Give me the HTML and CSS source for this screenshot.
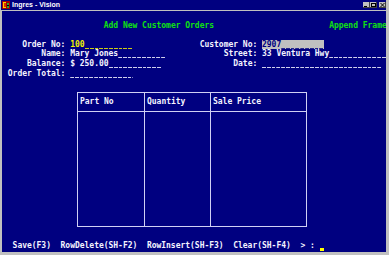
FILE: index.html
```html
<!DOCTYPE html>
<html>
<head>
<meta charset="utf-8">
<title>Ingres - Vision</title>
<link rel="stylesheet" href="styles.css">
</head>
<body>
<div class="window">
  <div class="titlebar">
    <svg class="appicon" width="8" height="8" viewBox="0 0 8 8">
      <rect x="0" y="0" width="8" height="8" fill="#a00000"/>
      <rect x="1" y="1" width="3" height="6" fill="#e03000"/>
      <rect x="1" y="1" width="1" height="6" fill="#ffd000"/>
      <rect x="1" y="1" width="3" height="1" fill="#ffd000"/>
      <rect x="1" y="6" width="3" height="1" fill="#ffd000"/>
      <rect x="5" y="2" width="2" height="5" fill="#30a030"/>
      <rect x="5" y="4" width="2" height="1" fill="#000"/>
    </svg>
    <span class="title">Ingres - Vision</span>
    <span class="buttons">
      <span class="btn"><svg width="5" height="4" viewBox="0 0 5 4"><rect x="0" y="3" width="3" height="1" fill="#000"/></svg></span>
      <span class="btn"><svg width="5" height="4" viewBox="0 0 5 4"><rect x="0.5" y="0.5" width="4" height="3" fill="none" stroke="#000" stroke-width="1"/></svg></span>
      <span class="btn btn-close"><svg width="5" height="4" viewBox="0 0 5 4"><path d="M0.5 0 L4.5 4 M4.5 0 L0.5 4" stroke="#000" stroke-width="1"/></svg></span>
    </span>
  </div>
  <div class="screen">
    <div class="line"> </div>
    <div class="line">                     <span class="green">Add New Customer Orders</span>                        <span class="green">Append Frame</span></div>
    <div class="line"> </div>
    <div class="line">    Order No: <span class="yellow">100<span class="blank">__________</span></span>              Customer No: <span class="hilite">2907<span class="blank">_________</span></span></div>
    <div class="line">        Name: Mary Jones<span class="blank">__________</span>            Street: 33 Ventura Hwy<span class="blank">____________</span></div>
    <div class="line">     Balance: $ 250.00<span class="blank">___________</span>               Date: <span class="blank">_________________________</span></div>
    <div class="line"> Order Total: <span class="blank">_____________</span></div>
    <div class="line"> </div>
    <div class="table-wrap">
      <div class="orders">
        <div class="cell head sep">Part No</div>
        <div class="cell head sep">Quantity</div>
        <div class="cell head">Sale Price</div>
        <div class="cell sep"></div>
        <div class="cell sep"></div>
        <div class="cell"></div>
      </div>
    </div>
    <div class="line"> </div>
    <div class="line">  Save(F3)  RowDelete(SH-F2)  RowInsert(SH-F3)  Clear(SH-F4)  &gt; : <span class="cursor"></span></div>
  </div>
</div>
</body>
</html>
```
FILE: styles.css
```css
html, body {
  margin: 0;
  padding: 0;
  background: #c0c0c0;
}

.window {
  width: 389px;
  height: 255px;
  box-sizing: border-box;
  padding: 0 3px 3px 1px;
  background: #c0c0c0;
  display: flex;
  flex-direction: column;
  overflow: hidden;
}

.titlebar {
  height: 10px;
  background: #000080;
  display: flex;
  align-items: center;
  padding-left: 1px;
  flex: none;
}

.appicon {
  display: block;
  flex: none;
}

.title {
  margin-left: 2px;
  font: bold 7px/10px "Liberation Sans", Arial, sans-serif;
  color: #ffffff;
  white-space: nowrap;
}

.buttons {
  margin-left: auto;
  display: flex;
  align-items: center;
}

.btn {
  width: 7px;
  height: 6px;
  box-sizing: border-box;
  background: #c0c0c0;
  border-right: 1px solid #404040;
  border-bottom: 1px solid #404040;
  display: flex;
  align-items: center;
  justify-content: center;
}

.btn svg {
  display: block;
}

.btn-close {
  margin-left: 2px;
}

.screen {
  flex: 1;
  margin-top: 1px;
  margin-left: 1px;
  padding-left: 1px;
  background: #000080;
  overflow: hidden;
  font-family: "DejaVu Sans Mono", "Liberation Mono", monospace;
  font-size: 8px;
  font-weight: bold;
  letter-spacing: -0.02px;
  color: #f4f4ff;
}

.line {
  height: 9.6px;
  line-height: 9.6px;
  white-space: pre;
}

.green {
  color: #10e010;
}

.yellow {
  color: #f0f000;
}

.blank {
  -webkit-mask-image: repeating-linear-gradient(to right, #000 0, #000 3.8px, transparent 3.8px, transparent 4.8px);
  mask-image: repeating-linear-gradient(to right, #000 0, #000 3.8px, transparent 3.8px, transparent 4.8px);
}

.hilite {
  display: inline-block;
  vertical-align: top;
  height: 9.6px;
  line-height: 9.6px;
  background: #c0c0c0;
  color: #000080;
}

.cursor {
  display: inline-block;
  vertical-align: top;
  width: 4px;
  height: 9.6px;
  background: linear-gradient(to bottom, transparent 7.5px, #ffff00 7.5px);
}

.table-wrap {
  height: 144px;
  box-sizing: border-box;
  padding-top: 4.2px;
  padding-left: 74px;
}

.orders {
  width: 230px;
  height: 135px;
  box-sizing: border-box;
  border: 1px solid #d0d0f4;
  display: grid;
  grid-template-columns: 67px 66px 95px;
  grid-template-rows: 19px 1fr;
}

.cell {
  box-sizing: border-box;
}

.cell.sep {
  border-right: 1px solid #d0d0f4;
}

.cell.head {
  border-bottom: 1px solid #d0d0f4;
  padding-left: 2px;
  line-height: 18px;
  white-space: pre;
}
```
